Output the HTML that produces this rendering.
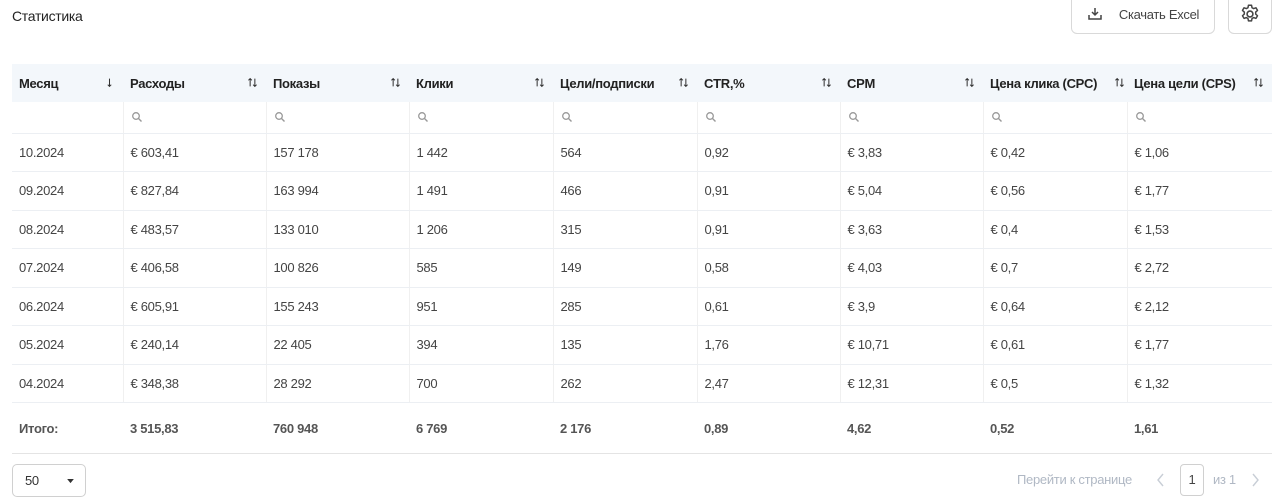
<!DOCTYPE html>
<html><head><meta charset="utf-8"><style>
*{box-sizing:border-box;margin:0;padding:0}
body{width:1280px;height:501px;background:#fff;font-family:"Liberation Sans",sans-serif;font-size:13px;color:#333;position:relative;overflow:hidden;letter-spacing:-0.3px}
.title{position:absolute;left:12px;top:8px;font-size:14px;color:#222}
.btn{position:absolute;top:-6px;height:40px;border:1px solid #d9d9d9;border-radius:6px;background:#fff;display:flex;align-items:center;justify-content:center;color:#444}
table{position:absolute;left:12px;top:64px;width:1260px;border-collapse:collapse;table-layout:fixed}
td,th{padding:0 7px;text-align:left;white-space:nowrap}
th{height:38px;background:#f3f7fb;font-weight:bold;color:#222;position:relative}
th svg{position:absolute;right:8px;top:13px}
tr.f td{height:31px;border-bottom:1px solid #eceff3;border-right:1px solid #f0f0f0}
tr.f td svg{display:block}
tr.d td{height:38.5px;border-bottom:1px solid #eceff3;border-right:1px solid #f0f0f0;color:#444}
tr.t td{height:51px;font-weight:bold;color:#555;border-bottom:1px solid #e4e4e4}
tr td:last-child{border-right:none}
.sel{position:absolute;left:12px;top:464px;width:74px;height:33px;border:1px solid #d0d0d0;border-radius:5px;padding:8px 12px;font-size:13px}
.pg{position:absolute;top:472px;color:#b0b8c4;font-size:13px}
</style></head><body>
<svg width="0" height="0" style="position:absolute"><defs>
<symbol id="srt" viewBox="0 0 14 14"><path d="M4 12V2M1.8 4.2L4 2l2.2 2.2M10 2v10M7.8 9.8L10 12l2.2-2.2" fill="none" stroke="#333" stroke-width="1.3"/></symbol>
<symbol id="mag" viewBox="0 0 12 12"><circle cx="5" cy="5" r="3.3" fill="none" stroke="#999" stroke-width="1.3"/><path d="M7.4 7.4L10.5 10.5" stroke="#999" stroke-width="1.4"/></symbol>
</defs></svg>
<div class="title">Статистика</div>
<div class="btn" style="left:1071px;width:144px"><svg width="16" height="14" viewBox="0 0 16 14" style="margin-right:16px"><path d="M8 1v7M5 5l3 3 3-3M2 8v4h12V8" fill="none" stroke="#444" stroke-width="1.5"/></svg>Скачать Excel</div>
<div class="btn" style="left:1228px;width:44px"><svg width="22" height="22" viewBox="0 0 24 24"><circle cx="12" cy="12" r="3.2" fill="none" stroke="#444" stroke-width="1.7"/><path d="M10.3 2.5h3.4l.5 2.6 1.8 1 2.5-.9 1.7 2.9-2 1.8v2.2l2 1.8-1.7 2.9-2.5-.9-1.8 1-.5 2.6h-3.4l-.5-2.6-1.8-1-2.5.9-1.7-2.9 2-1.8v-2.2l-2-1.8 1.7-2.9 2.5.9 1.8-1z" fill="none" stroke="#444" stroke-width="1.6" stroke-linejoin="round"/></svg></div>
<table>
<colgroup><col style="width:111px"><col style="width:143px"><col style="width:143px"><col style="width:144px"><col style="width:144px"><col style="width:143px"><col style="width:143px"><col style="width:144px"><col style="width:145px"></colgroup>
<tr><th>Месяц<svg width="11" height="11" viewBox="0 0 14 14"><path d="M7 2v10M4.8 9.8L7 12l2.2-2.2" fill="none" stroke="#333" stroke-width="1.3"/></svg></th><th>Расходы<svg width="11" height="11"><use href="#srt"/></svg></th><th>Показы<svg width="11" height="11"><use href="#srt"/></svg></th><th>Клики<svg width="11" height="11"><use href="#srt"/></svg></th><th>Цели/подписки<svg width="11" height="11"><use href="#srt"/></svg></th><th>CTR,%<svg width="11" height="11"><use href="#srt"/></svg></th><th>CPM<svg width="11" height="11"><use href="#srt"/></svg></th><th>Цена клика (CPC)<svg width="11" height="11" style="right:2px"><use href="#srt"/></svg></th><th>Цена цели (CPS)<svg width="11" height="11"><use href="#srt"/></svg></th></tr>
<tr class="f"><td></td><td><svg width="12" height="12"><use href="#mag"/></svg></td><td><svg width="12" height="12"><use href="#mag"/></svg></td><td><svg width="12" height="12"><use href="#mag"/></svg></td><td><svg width="12" height="12"><use href="#mag"/></svg></td><td><svg width="12" height="12"><use href="#mag"/></svg></td><td><svg width="12" height="12"><use href="#mag"/></svg></td><td><svg width="12" height="12"><use href="#mag"/></svg></td><td><svg width="12" height="12"><use href="#mag"/></svg></td></tr>
<tr class="d"><td>10.2024</td><td>€ 603,41</td><td>157 178</td><td>1 442</td><td>564</td><td>0,92</td><td>€ 3,83</td><td>€ 0,42</td><td>€ 1,06</td></tr>
<tr class="d"><td>09.2024</td><td>€ 827,84</td><td>163 994</td><td>1 491</td><td>466</td><td>0,91</td><td>€ 5,04</td><td>€ 0,56</td><td>€ 1,77</td></tr>
<tr class="d"><td>08.2024</td><td>€ 483,57</td><td>133 010</td><td>1 206</td><td>315</td><td>0,91</td><td>€ 3,63</td><td>€ 0,4</td><td>€ 1,53</td></tr>
<tr class="d"><td>07.2024</td><td>€ 406,58</td><td>100 826</td><td>585</td><td>149</td><td>0,58</td><td>€ 4,03</td><td>€ 0,7</td><td>€ 2,72</td></tr>
<tr class="d"><td>06.2024</td><td>€ 605,91</td><td>155 243</td><td>951</td><td>285</td><td>0,61</td><td>€ 3,9</td><td>€ 0,64</td><td>€ 2,12</td></tr>
<tr class="d"><td>05.2024</td><td>€ 240,14</td><td>22 405</td><td>394</td><td>135</td><td>1,76</td><td>€ 10,71</td><td>€ 0,61</td><td>€ 1,77</td></tr>
<tr class="d"><td>04.2024</td><td>€ 348,38</td><td>28 292</td><td>700</td><td>262</td><td>2,47</td><td>€ 12,31</td><td>€ 0,5</td><td>€ 1,32</td></tr>
<tr class="t"><td>Итого:</td><td>3 515,83</td><td>760 948</td><td>6 769</td><td>2 176</td><td>0,89</td><td>4,62</td><td>0,52</td><td>1,61</td></tr>
</table>
<div class="sel">50<svg width="7" height="5" viewBox="0 0 8 6" style="position:absolute;right:11px;top:14px"><path d="M0 0h8L4 5z" fill="#333"/></svg></div>
<div class="pg" style="left:1017px">Перейти к странице</div>
<svg style="position:absolute;left:1157px;top:473px" width="8" height="14" viewBox="0 0 8 14"><path d="M6 1L1 7l5 6" fill="none" stroke="#c8ced6" stroke-width="1.4"/></svg>
<div style="position:absolute;left:1180px;top:464px;width:24px;height:32px;border:1px solid #d0d0d0;border-radius:4px;text-align:center;line-height:30px;color:#444">1</div>
<div class="pg" style="left:1213px">из 1</div>
<svg style="position:absolute;left:1251px;top:473px" width="8" height="14" viewBox="0 0 8 14"><path d="M2 1l5 6-5 6" fill="none" stroke="#c8ced6" stroke-width="1.4"/></svg>
</body></html>
